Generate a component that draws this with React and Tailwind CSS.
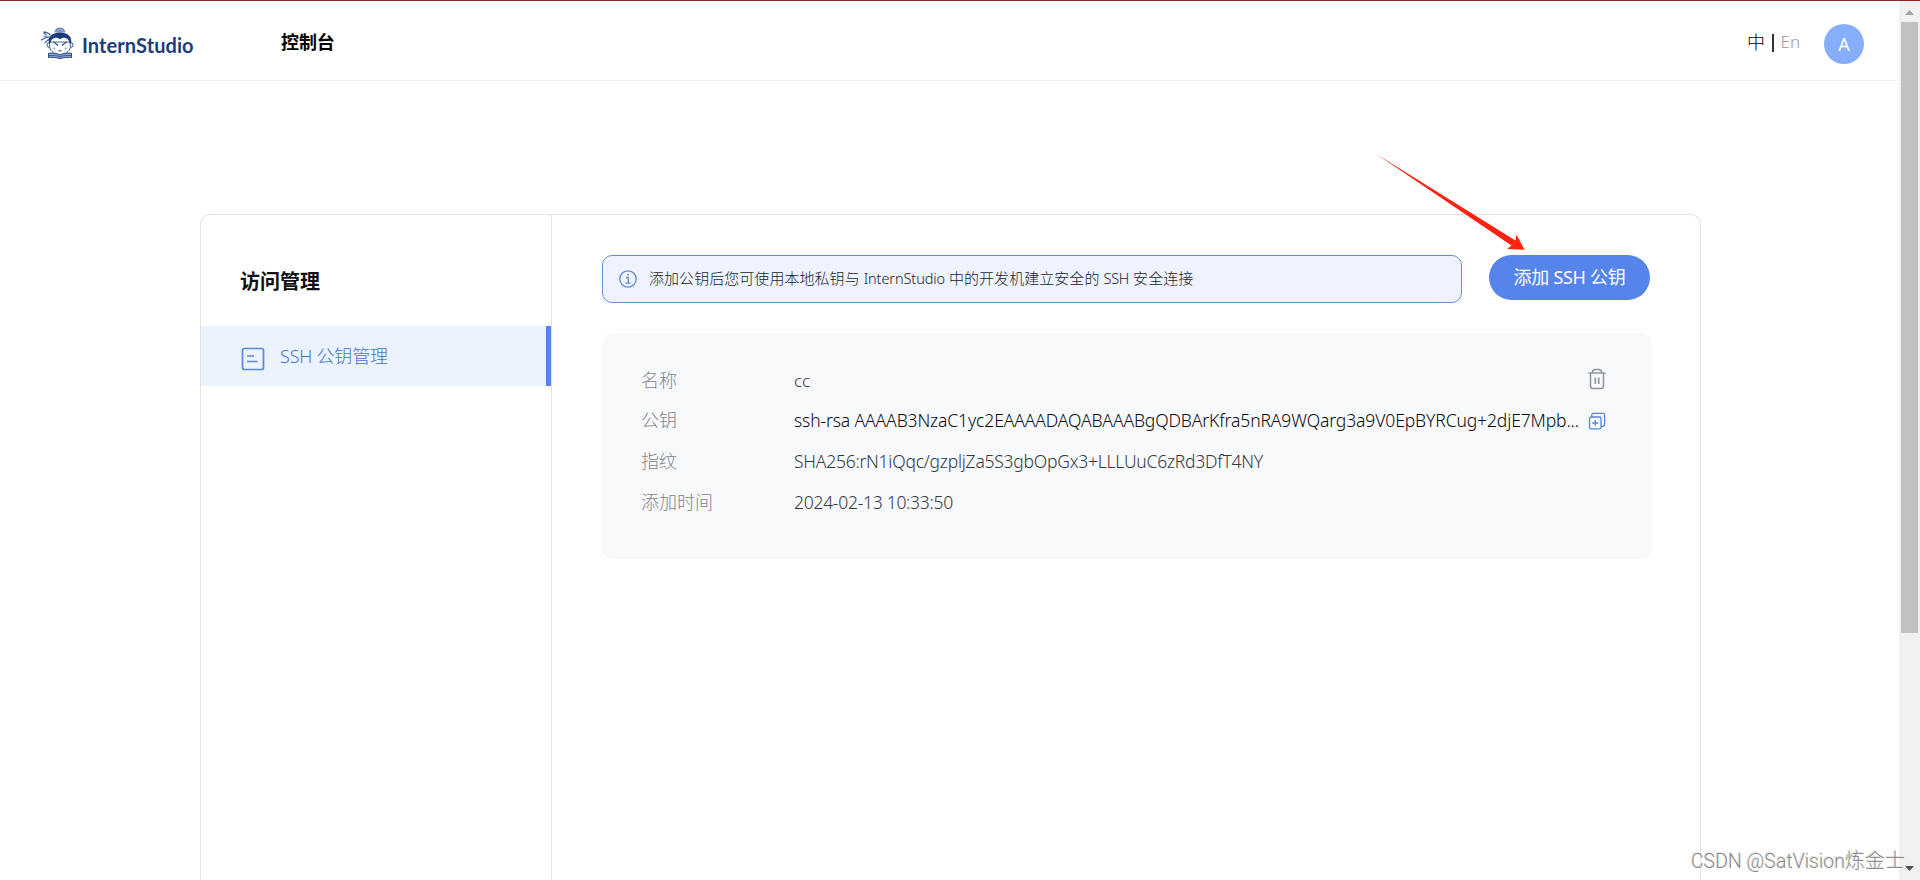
function Mascot() {
  return (
    <svg viewBox="0 0 34 34" className="h-[34px] w-[34px] shrink-0" fill="none">
      <path d="M15.3 5.4C15.4 1 24.300 1 24.600 5.400Z" fill="#8fa2cb" stroke="#47619f" strokeWidth=".8" />
      <path d="M14.600 6h10.600" stroke="#8fa2cb" strokeWidth="1.200" />
      <path d="M10.500 9.500C8 5.800 5.200 6 3.800 6.200c.5 1.300 1.400 2 2.700 2.500M9.500 11.500C6 10.500 5.500 12 1 14.200M9.800 13c-2.500.3-2.800 3-5.300 4" stroke="#47619f" strokeWidth="1.300" />
      <path d="M3.500 10.300c2-.2 4 .2 6.500 1.200" stroke="#7d93c2" strokeWidth="1.400" />
      <circle cx="9.200" cy="19" r="2.300" fill="#fff" stroke="#1c3c7c" strokeWidth=".9" />
      <circle cx="30.800" cy="19" r="2.300" fill="#fff" stroke="#1c3c7c" strokeWidth=".9" />
      <path d="M9.700 16v5.500C11 26 15 28.600 20 28.600S29 26 30.300 21.500V16Z" fill="#fff" stroke="#1c3c7c" strokeWidth=".8" />
      <path d="M8.900 17.500C7.500 10 13 6.500 20 6.500S32.500 10 31.100 17.500H29.700C29.300 14.500 28 12.600 25.800 11.900 23.200 11.300 21.200 12 20 13.400 18.800 12 16.800 11.300 14.200 11.900 12 12.600 10.700 14.500 10.300 17.500Z" fill="#1c3c7c" />
      <path d="M13.500 15.800l4.500 3.700M26.500 15.800l-4.500 3.700" stroke="#1c3c7c" strokeWidth="1.100" />
      <path d="M18.500 24.800h3" stroke="#1c3c7c" strokeWidth="1" />
      <circle cx="14.200" cy="22.500" r="1" fill="#8fa2cb" />
      <circle cx="25.800" cy="22.500" r="1" fill="#8fa2cb" />
      <path d="M8.500 27.200c4-.3 8.500 0 11.500 1.700 3-1.700 7.500-2 11.500-1.700v4.300c-4.500-.2-8.500-.1-11.500 1.200-3-1.300-7-1.400-11.500-1.200Z" fill="#8fa2cb" stroke="#2b4a88" strokeWidth="1" />
      <path d="M9 29.500c4-.2 8-.1 11 1.300 3-1.400 7-1.500 11-1.300" stroke="#2b4a88" strokeWidth=".8" />
    </svg>
  );
}

function KeyListIcon() {
  return (
    <svg viewBox="0 0 24 24" className="h-6 w-6 shrink-0" fill="none" stroke="#5b86dc" strokeWidth="1.700">
      <rect x="1.500" y="1.500" width="21" height="21" rx="2" />
      <path d="M6 9h7M6 14.500h10.500" />
    </svg>
  );
}

function InfoIcon() {
  return (
    <svg viewBox="0 0 18 18" className="h-[18px] w-[18px] shrink-0" fill="none" stroke="#6389d6" strokeWidth="1.300">
      <circle cx="9" cy="9" r="8.200" />
      <path d="M7 7.500h2.200V13M6.500 13.200h5" />
      <path d="M8.200 4.800h1.600" strokeWidth="1.600" />
    </svg>
  );
}

function TrashIcon() {
  return (
    <svg viewBox="0 0 18 22" className="h-[22px] w-[18px]" fill="none" stroke="#90969f" strokeWidth="1.600">
      <path d="M.3 5h17.400M4.300 5C4.500 2.500 6 1.500 7.300 1.500h3.400C12 1.500 13.500 2.500 13.700 5" />
      <path d="M2.500 5v13.300c0 1.300.8 2.200 2.200 2.200h8.600c1.400 0 2.200-.9 2.200-2.200V5M7.300 9.500v6.500M10.700 9.500v6.500" />
    </svg>
  );
}

function CopyIcon() {
  return (
    <svg viewBox="0 0 18 18" className="h-[18px] w-[18px]" fill="none" stroke="#5a85dc" strokeWidth="1.300">
      <rect x="1.500" y="5" width="11.500" height="11.800" rx="1.500" />
      <path d="M3.800 5V3c0-1 .6-1.600 1.600-1.600h9.600c1 0 1.600.6 1.600 1.600v9.300c0 1.400-1 2.300-3.400 2.300M7.200 8v6M4.300 11h5.900" />
    </svg>
  );
}

function Row({ label, children }) {
  return (
    <div className="flex h-[40.6px] items-center">
      <dt className="w-[153px] shrink-0 text-[#80868f]">{label}</dt>
      {children}
    </div>
  );
}

function Header() {
  return (
    <header className="flex h-[81px] shrink-0 border-t border-b border-t-[#7c2a30] border-b-[#f1f1f1]">
      <div className="flex h-[34px] w-[240px] pl-10 pt-[25px]">
        <Mascot />
        <span className="ml-2 mt-[7px] whitespace-nowrap font-[Lato,sans-serif] text-[20px] leading-6 font-bold tracking-[0.08px] text-[#1c3c7c]">
          InternStudio
        </span>
      </div>
      <nav className="ml-[41px] flex-1 pt-[27px] text-[18px] leading-7 font-bold tracking-[-0.1px] text-black">控制台</nav>
      <div className="flex w-[120px] gap-[6px] pt-[27px] text-[17px] leading-7 font-light whitespace-nowrap">
        <span className="text-[18px] text-black">中</span>
        <span className="mt-[6px] ml-px h-[18px] w-[1.500px] bg-[#333]" />
        <span className="ml-px text-[#9c9c9c]">En</span>
      </div>
      <div className="mt-[23px] mr-[35px] -ml-[43px] flex h-10 w-10 items-center justify-center rounded-full bg-[#87aefd] text-[18px] text-white">
        A
      </div>
    </header>
  );
}

function Sidebar() {
  return (
    <aside className="w-[351px] shrink-0 border-r border-[#e2e3e5]">
      <h2 className="mt-[52px] ml-[39px] h-[59px] text-[20px] leading-[30px] font-bold text-[#111]">访问管理</h2>
      <div className="flex h-[60px] items-center border-r-[5px] border-[#5584eb] bg-[#ebf3fe] pt-[5px] pl-10 text-[18px] font-light text-[#4a70d2]">
        <KeyListIcon />
        <span className="-mt-[5px] ml-[15px] tracking-[-0.2px]">SSH 公钥管理</span>
      </div>
    </aside>
  );
}

function KeyCard() {
  return (
    <div className="mt-[30px] flex h-[226px] rounded-[10px] bg-[#f8f9fb] pt-[27px] pl-[39px]">
      <dl className="w-[938px] text-[18px] font-light whitespace-nowrap">
        <Row label="名称">
          <dd className="text-[17px] text-[#343842]">cc</dd>
        </Row>
        <Row label="公钥">
          <dd className="-mt-px text-[17.5px] tracking-[-0.12px] text-[#080a0e]">
            ssh-rsa AAAAB3NzaC1yc2EAAAADAQABAAABgQDBArKfra5nRA9WQarg3a9V0EpBYRCug+2djE7Mpb...
          </dd>
        </Row>
        <Row label="指纹">
          <dd className="text-[17.5px] tracking-[-0.24px] text-[#343842]">
            SHA256:rN1iQqc/gzpljZa5S3gbOpGx3+LLLUuC6zRd3DfT4NY
          </dd>
        </Row>
        <Row label="添加时间">
          <dd className="text-[17.5px] tracking-[-0.28px] text-[#343842]">2024-02-13 10:33:50</dd>
        </Row>
      </dl>
      <div className="ml-[9px] flex flex-col items-center gap-[22px] pt-[8px]">
        <TrashIcon />
        <CopyIcon />
      </div>
    </div>
  );
}

function Scrollbar() {
  return (
    <div className="flex w-[21px] shrink-0 flex-col items-center border-t border-[#7c2a30] bg-[#f1f1f1]">
      <svg viewBox="0 0 21 21" className="h-[21px] w-[21px]">
        <path d="M6 14l4.500-5 4.500 5Z" fill="#a3a3a3" />
      </svg>
      <div className="h-[611px] w-[17px] bg-[#c1c1c1]" />
      <svg viewBox="0 0 21 21" className="mt-auto h-[21px] w-[21px]">
        <path d="M6 7h9l-4.500 5Z" fill="#505050" />
      </svg>
    </div>
  );
}

export default function App() {
  return (
    <div className="relative flex h-[880px] w-[1920px] overflow-hidden bg-white font-['Noto_Sans','Noto_Sans_CJK_SC',sans-serif]">
      <div className="flex min-w-0 flex-1 flex-col">
        <Header />
        <main className="mt-[133px] ml-[200px] flex w-[1501px] flex-1 rounded-t-[10px] border border-b-0 border-[#e2e3e5]">
          <Sidebar />
          <section className="w-[1100px] pt-10 pl-[50px]">
            <div className="flex items-start gap-[27px]">
              <div className="flex h-12 w-[860px] items-center gap-3 rounded-[10px] border border-[#6790cd] bg-[#eef3ff] pl-4 text-[15px] font-light whitespace-nowrap text-[#20242e]">
                <InfoIcon />
                <span className="-mt-[2px] tracking-[0.05px]">
                  添加公钥后您可使用本地私钥与 <span className="text-[14.5px] tracking-[-0.1px]">InternStudio</span>{" "}
                  中的开发机建立安全的 <span className="text-[14.5px] tracking-[-0.2px]">SSH</span> 安全连接
                </span>
              </div>
              <button className="h-[45px] w-[161px] rounded-full bg-[#5584eb] text-[18px] tracking-[-0.3px] text-white">
                添加 SSH 公钥
              </button>
            </div>
            <KeyCard />
          </section>
        </main>
      </div>
      <Scrollbar />
      <svg viewBox="0 0 150 98" className="absolute top-[153px] left-[1375px] h-[98px] w-[150px]">
        <path d="M.5.5L140.500 87.500L141.500 81.500L149.500 96.800L132 96L136.500 92.500L.5.500Z" fill="#fb2413" />
      </svg>
      <div className="absolute right-[15px] bottom-[3px] font-['Roboto','Noto_Sans_CJK_SC',sans-serif] text-[20px] leading-[30px] font-light whitespace-nowrap text-[#8c8c8c] [text-shadow:-1px_-1px_0_#e4e4e4]">
        <span className="text-[19.500px]">CSDN @SatVision</span>炼金士
      </div>
    </div>
  );
}
